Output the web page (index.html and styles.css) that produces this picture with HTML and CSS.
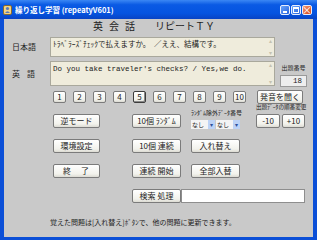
FILE: index.html
```html
<!DOCTYPE html>
<html>
<head>
    <meta charset="utf-8">
    <link rel="stylesheet" href="styles.css">
</head>
<body>
    <div class="window">
        <div class="titlebar">
            <svg class="app-icon" width="9" height="10" viewBox="0 0 9 10">
                <rect x="0.5" y="0.5" width="8" height="9" rx="1.5" fill="#f1d486" stroke="#8a6a2a"/>
                <circle cx="4.5" cy="3.5" r="1.6" fill="#5a7ab8"/>
                <path d="M2 8 Q4.5 4.5 7 8 Z" fill="#5a7ab8"/>
            </svg>
            <span class="title">繰り返し学習 (repeatyV601)</span>
            <div class="controls">
                <span class="ctl"><span class="min-bar"></span></span>
                <span class="ctl"><span class="max-box"></span></span>
                <span class="ctl close">×</span>
            </div>
        </div>

        <div class="client">
            <div class="heading"><span class="wide">英会話</span><span>リピートＴＹ</span></div>

            <div class="qa-row">
                <div class="qa-label">日本語</div>
                <div class="textbox short">
                    <div class="text">ﾄﾗﾍﾞﾗｰｽﾞﾁｪｯｸで払えますか。　／ええ、結構です。</div>
                    <div class="vscroll"><span class="arr">▴</span><span class="arr">▾</span></div>
                </div>
            </div>
            <div class="qa-row">
                <div class="qa-label spaced">英語</div>
                <div class="textbox tall">
                    <div class="text en">Do you take traveler's checks? / Yes,we do.</div>
                    <div class="vscroll"><span class="arr">▴</span><span class="arr">▾</span></div>
                </div>
                <div class="qnum">
                    <div class="qnum-label">出題番号</div>
                    <div class="qnum-box">18</div>
                </div>
            </div>

            <div class="num-row">
                <div class="nums">
                    <button class="btn num">1</button>
                    <button class="btn num">2</button>
                    <button class="btn num">3</button>
                    <button class="btn num">4</button>
                    <button class="btn num active">5</button>
                    <button class="btn num">6</button>
                    <button class="btn num">7</button>
                    <button class="btn num">8</button>
                    <button class="btn num">9</button>
                    <button class="btn num">10</button>
                </div>
                <button class="btn speak">発音を聞く</button>
            </div>

            <div class="panel">
                <button class="btn c1">逆モード</button>
                <button class="btn c2">10個 ﾗﾝﾀﾞﾑ</button>
                <div class="c3 stack">
                    <div class="tiny">ﾗﾝﾀﾞﾑ除外ﾃﾞｰﾀ番号</div>
                    <div class="combos">
                        <div class="combo"><span class="val">なし</span><span class="drop">▾</span></div>
                        <div class="combo"><span class="val">なし</span><span class="drop">▾</span></div>
                    </div>
                </div>
                <div class="c4 stack">
                    <div class="tiny narrow">出題ﾃﾞｰﾀの順番変更</div>
                    <div class="pair">
                        <button class="btn">-10</button>
                        <button class="btn">+10</button>
                    </div>
                </div>

                <button class="btn c1">環境設定</button>
                <button class="btn c2">10個 連続</button>
                <button class="btn c3">入れ替え</button>

                <button class="btn c1 spaced-btn">終　了</button>
                <button class="btn c2">連続 開始</button>
                <button class="btn c3">全部入替</button>

                <button class="btn c2">検索 処理</button>
                <input class="search" type="text">
            </div>

            <div class="footer">覚えた問題は[入れ替え]ﾎﾞﾀﾝで、他の問題に更新できます。</div>
        </div>
    </div>
</body>
</html>
```

FILE: styles.css
```css
* {
    box-sizing: border-box;
}
body {
    margin: 0;
    font-family: "Noto Sans CJK JP", sans-serif;
    color: #222;
}
.window {
    width: 317px;
    height: 240px;
    display: flex;
    flex-direction: column;
    background: #0b4fd7;
}
.titlebar {
    height: 19px;
    flex: none;
    display: flex;
    align-items: center;
    padding: 0 5px 0 3px;
    background: linear-gradient(#3b87f4, #0a5ae4 25%, #0554e0 70%, #0843c4);
    color: #fff;
}
.title {
    margin-left: 3px;
    font-size: 7.5px;
    font-weight: bold;
    line-height: 10px;
}
.controls {
    margin-left: auto;
    display: flex;
    gap: 1px;
}
.ctl {
    width: 10px;
    height: 10px;
    border: 1px solid #e8eefc;
    border-radius: 2px;
    background: linear-gradient(135deg, #6aa4fa, #2462de);
    display: flex;
    align-items: center;
    justify-content: center;
}
.ctl.close {
    background: linear-gradient(135deg, #f39a70, #d6441a);
    color: #fff;
    font-size: 10px;
    line-height: 8px;
}
.min-bar {
    width: 4px;
    height: 2px;
    margin-top: 4px;
    background: #fff;
}
.max-box {
    width: 6px;
    height: 6px;
    border: 1px solid #fff;
    border-top-width: 2px;
}

.client {
    flex: 1;
    margin: 0 4px 3px;
    background: #c9c9c9;
}
.heading {
    height: 18px;
    padding: 1px 0 0 89px;
    font-size: 10px;
    line-height: 12px;
    display: flex;
}
.heading .wide {
    letter-spacing: 6px;
    margin-right: 14px;
}

.qa-row {
    display: flex;
    align-items: center;
    padding-left: 8px;
}
.qa-row + .qa-row {
    margin-top: 4px;
}
.qa-label {
    width: 38px;
    font-size: 8px;
    line-height: 10px;
}
.qa-label.spaced {
    letter-spacing: 7px;
}
.textbox {
    width: 225px;
    display: flex;
    background: #efecdc;
    border: 1px solid #a9a89c;
}
.textbox.short {
    height: 20px;
}
.textbox.tall {
    height: 25px;
}
.textbox .text {
    flex: 1;
    padding: 2px 2px;
    font-family: "Liberation Mono", "Noto Sans CJK JP", monospace;
    font-size: 7.5px;
    line-height: 10px;
    white-space: nowrap;
}
.vscroll {
    width: 8px;
    display: flex;
    flex-direction: column;
    justify-content: space-between;
    align-items: center;
    font-size: 6px;
    line-height: 6px;
    color: #c4c1b0;
}

.qnum {
    margin-left: 5px;
    width: 27px;
    align-self: flex-end;
    margin-bottom: -1px;
}
.qnum-label {
    font-size: 6px;
    line-height: 8px;
    text-align: center;
}
.qnum-box {
    height: 12px;
    margin-top: 3px;
    padding-right: 4px;
    background: #eeeeee;
    border: 1px solid #9a9a9a;
    font-family: "Liberation Mono", monospace;
    font-size: 7.5px;
    line-height: 10px;
    text-align: right;
}

.btn {
    height: 14px;
    padding: 0;
    border: 1px solid #7b7b7b;
    border-radius: 2px;
    background: linear-gradient(#ffffff, #f2f2ec 75%, #dcdbd3);
    font-family: "Noto Sans CJK JP", sans-serif;
    font-size: 8px;
    line-height: 12px;
    color: #222;
}
.num-row {
    height: 14px;
    margin-top: 4px;
    padding: 0 10px 0 49px;
    display: flex;
    align-items: center;
}
.nums {
    display: flex;
    gap: 7px;
}
.num {
    width: 13px;
    height: 12px;
    line-height: 10px;
}
.num.active {
    border-color: #3c3c3c;
    box-shadow: inset -1px -1px 0 #8a8a8a;
}
.speak {
    margin-left: auto;
    width: 46px;
}

.panel {
    padding-left: 49px;
    display: grid;
    grid-template-columns: 47px 32px 49px 10px 49px 16px 49px;
    grid-template-rows: 24px 14px 14px 14px;
    row-gap: 11px;
    align-items: end;
}
.c1 { grid-column: 1; }
.c2 { grid-column: 3; }
.c3 { grid-column: 5; }
.c4 { grid-column: 7; }
.spaced-btn {
    letter-spacing: 1px;
}
.stack {
    display: flex;
    flex-direction: column;
}
.tiny {
    font-size: 6px;
    line-height: 7px;
    white-space: nowrap;
    margin-bottom: 4px;
}
.tiny.narrow {
    font-size: 5.6px;
    margin-bottom: 3px;
}
.combos {
    display: flex;
    gap: 1px;
    margin-bottom: -1px;
}
.combo {
    width: 24px;
    height: 9px;
    display: flex;
    background: #f4f4f4;
    font-size: 6px;
    line-height: 9px;
}
.combo .val {
    flex: 1;
    padding-left: 1px;
}
.combo .drop {
    width: 7px;
    background: #bcd2f6;
    color: #2d4f9a;
    text-align: center;
}
.pair {
    display: flex;
    justify-content: space-between;
}
.pair .btn {
    width: 24px;
}
.pair .btn + .btn {
    width: 23px;
}
.search {
    grid-column: 4 / 8;
    height: 14px;
    margin: 0;
    background: #fff;
    border: 1px solid #8e8e8e;
}

.footer {
    margin-top: 14px;
    padding-left: 46px;
    font-size: 7px;
    line-height: 10px;
}
```
